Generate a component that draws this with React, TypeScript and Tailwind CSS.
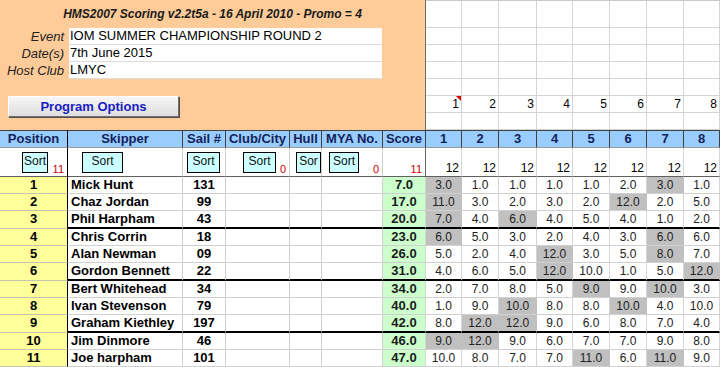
import React from "react"

const info: [string, string][] = [
  ["Event", "IOM SUMMER CHAMPIONSHIP ROUND 2"],
  ["Date(s)", "7th June 2015"],
  ["Host Club", "LMYC"],
]

// g = discarded race (grey cell)
const results: [number, string, string, string, string][] = [
  [1, "Mick Hunt", "131", "7.0", "3g 1 1 1 1 2 3g 1"],
  [2, "Chaz Jordan", "99", "17.0", "11g 3 2 3 2 12g 2 5"],
  [3, "Phil Harpham", "43", "20.0", "7g 4 6g 4 5 4 1 2"],
  [4, "Chris Corrin", "18", "23.0", "6g 5 3 2 4 3 6g 6"],
  [5, "Alan Newman", "09", "26.0", "5 2 4 12g 3 5 8g 7"],
  [6, "Gordon Bennett", "22", "31.0", "4 6 5 12g 10 1 5 12g"],
  [7, "Bert Whitehead", "34", "34.0", "2 7 8 5 9g 9 10g 3"],
  [8, "Ivan Stevenson", "79", "40.0", "1 9 10g 8 8 10g 4 10"],
  [9, "Graham Kiethley", "197", "42.0", "8 12g 12g 9 6 8 7 4"],
  [10, "Jim Dinmore", "46", "46.0", "9g 12g 9 6 7 7 9 8"],
  [11, "Joe harpham", "101", "47.0", "10 8 7 7 11g 6 11g 9"],
]

const races = [1, 2, 3, 4, 5, 6, 7, 8]

const headers = ["Position", "Skipper", "Sail #", "Club/City", "Hull", "MYA No.", "Score"]

function SortBtn({ w, ml, label = "Sort" }: { w: string; ml: string; label?: string }) {
  return (
    <div
      className={`${w} ${ml} mt-[4px] h-[21px] bg-[#ccffff] border border-black text-[12px] leading-[17px] text-center text-[#111]`}
    >
      {label}
    </div>
  )
}

export default function App() {
  return (
    <div className="w-[720px] h-[367px] overflow-hidden bg-white font-['Liberation_Sans',Arial,sans-serif] text-black">
      {/* top panel */}
      <div className="flex h-[130px]">
        <div className="w-[426px] shrink-0 bg-[#ffcc99] border-r border-[#6a6a6a] flex flex-col">
          <div className="h-[28px] flex items-center justify-center text-[12px] font-bold italic text-[#1a1a1a]">
            HMS2007 Scoring v2.2t5a - 16 April 2010 - Promo = 4
          </div>
          {info.map(([label, value]) => (
            <div key={label} className="flex h-[17px]">
              <div className="w-[69px] pr-[5px] text-right italic text-[13px] leading-[17px] text-[#222]">{label}</div>
              <div className="w-[313px] bg-white border-b border-[#dcdcdc] pl-[1px] text-[13px] leading-[16px]">
                {value}
              </div>
            </div>
          ))}
          <div className="pl-[8px] pt-[17px]">
            <div className="w-[171px] h-[21px] bg-gradient-to-b from-[#f6f6f6] to-[#dedede] border border-t-white border-l-white border-r-[#707070] border-b-[#707070] shadow-[1px_1px_0_#505050] flex items-center justify-center text-[13px] font-bold text-[#1c1cc4]">
              Program Options
            </div>
          </div>
        </div>
        <div className="flex-1 grid grid-cols-[36px_37px_38px_36px_37px_37px_37px_36px] grid-rows-[27px_repeat(6,17px)] border-t border-[#c8c8c8]">
          {Array.from({ length: 7 }).map((_, r) =>
            races.map((n) => (
              <div
                key={`${r}-${n}`}
                className="relative border-r border-b border-[#d4d4d4] text-right pr-[2px] text-[12px] leading-[16px]"
              >
                {r === 5 ? n : ""}
                {r === 5 && n === 1 && (
                  <span className="absolute top-0 right-0 w-0 h-0 border-t-[5px] border-l-[5px] border-t-[#e00000] border-l-transparent" />
                )}
              </div>
            ))
          )}
        </div>
      </div>

      {/* results table */}
      <div className="grid grid-cols-[68px_115px_43px_64px_32px_61px_43px_36px_37px_38px_36px_37px_37px_37px_36px]">
        {headers.map((h, i) => (
          <div
            key={h}
            className={`h-[18px] bg-[#99ccff] border-t border-b border-t-[#404040] border-b-[#9a9a9a] border-r ${
              i === 0 ? "border-r-black" : "border-r-[#404040]"
            } flex items-center justify-center text-[13px] font-bold text-[#13235a] whitespace-nowrap overflow-hidden`}
          >
            {h}
          </div>
        ))}
        {races.map((n) => (
          <div
            key={`h${n}`}
            className="h-[18px] bg-[#99ccff] border-t border-b border-r border-t-[#404040] border-b-[#9a9a9a] border-r-[#404040] flex items-center justify-center text-[13px] font-bold text-[#13235a]"
          >
            {n}
          </div>
        ))}

        {/* sort row */}
        <div className="relative h-[29px] border-b border-r border-b-[#606060] border-r-black flex">
          <SortBtn w="w-[26px]" ml="ml-[22px]" />
          <span className="absolute right-[3px] bottom-[1px] text-[11px] leading-[12px] text-[#cc0000]">11</span>
        </div>
        <div className="h-[29px] border-b border-r border-b-[#606060] border-r-[#d0d0d0] flex">
          <SortBtn w="w-[41px]" ml="ml-[14px]" />
        </div>
        <div className="h-[29px] border-b border-r border-b-[#606060] border-r-[#d0d0d0] flex">
          <SortBtn w="w-[33px]" ml="ml-[4px]" />
        </div>
        <div className="relative h-[29px] border-b border-r border-b-[#606060] border-r-[#d0d0d0] flex">
          <SortBtn w="w-[33px]" ml="ml-[17px]" />
          <span className="absolute right-[3px] bottom-[1px] text-[11px] leading-[12px] text-[#cc0000]">0</span>
        </div>
        <div className="h-[29px] border-b border-r border-b-[#606060] border-r-[#d0d0d0] flex">
          <SortBtn w="w-[26px]" ml="ml-[6px]" label="Sor" />
        </div>
        <div className="relative h-[29px] border-b border-r border-b-[#606060] border-r-[#d0d0d0] flex">
          <SortBtn w="w-[30px]" ml="ml-[7px]" />
          <span className="absolute right-[3px] bottom-[1px] text-[11px] leading-[12px] text-[#cc0000]">0</span>
        </div>
        <div className="relative h-[29px] border-b border-r border-b-[#606060] border-r-[#606060]">
          <span className="absolute right-[3px] bottom-[1px] text-[11px] leading-[12px] text-[#cc0000]">11</span>
        </div>
        {races.map((n) => (
          <div
            key={`s${n}`}
            className="h-[29px] border-b border-r border-b-[#606060] border-r-[#d4d4d4] flex items-end justify-end pr-[2px] pb-[1px] text-[12px] leading-[14px]"
          >
            12
          </div>
        ))}

        {/* data rows */}
        {results.map(([pos, name, sail, score, res]) => {
          const thick = pos === 3 || pos === 6 || pos === 9
          const h = thick ? "h-[18px]" : "h-[17px]"
          const bb = thick ? "border-b-2 border-b-black" : "border-b border-b-[#d0d0d0]"
          return (
            <React.Fragment key={pos}>
              <div
                className={`${h} bg-[#ffff99] border-b border-b-[#c4c4b0] border-r border-r-black text-center text-[13px] font-bold leading-[16px]`}
              >
                {pos}
              </div>
              <div className={`${h} ${bb} border-r border-r-[#d0d0d0] pl-[3px] text-[13px] font-bold leading-[16px] whitespace-nowrap`}>
                {name}
              </div>
              <div className={`${h} ${bb} border-r border-r-[#d0d0d0] text-center text-[13px] font-bold leading-[16px]`}>
                {sail}
              </div>
              <div className={`${h} ${bb} border-r border-r-[#d0d0d0]`} />
              <div className={`${h} ${bb} border-r border-r-[#d0d0d0]`} />
              <div className={`${h} ${bb} border-r border-r-[#d0d0d0]`} />
              <div className={`${h} ${bb} bg-[#ccffcc] border-r border-r-[#c8dcc8] text-center text-[13px] font-bold leading-[16px] text-[#1a1a1a]`}>
                {score}
              </div>
              {res.split(" ").map((t, i) => {
                const g = t.endsWith("g")
                const v = parseInt(t, 10)
                return (
                  <div
                    key={i}
                    className={`${h} ${bb} border-r text-center text-[12px] leading-[16px] text-[#222] ${
                      g ? "bg-[#c0c0c0] border-r-[#c0c0c0]" : "border-r-[#d4d4d4]"
                    }`}
                  >
                    {v}.0
                  </div>
                )
              })}
            </React.Fragment>
          )
        })}
      </div>
    </div>
  )
}
